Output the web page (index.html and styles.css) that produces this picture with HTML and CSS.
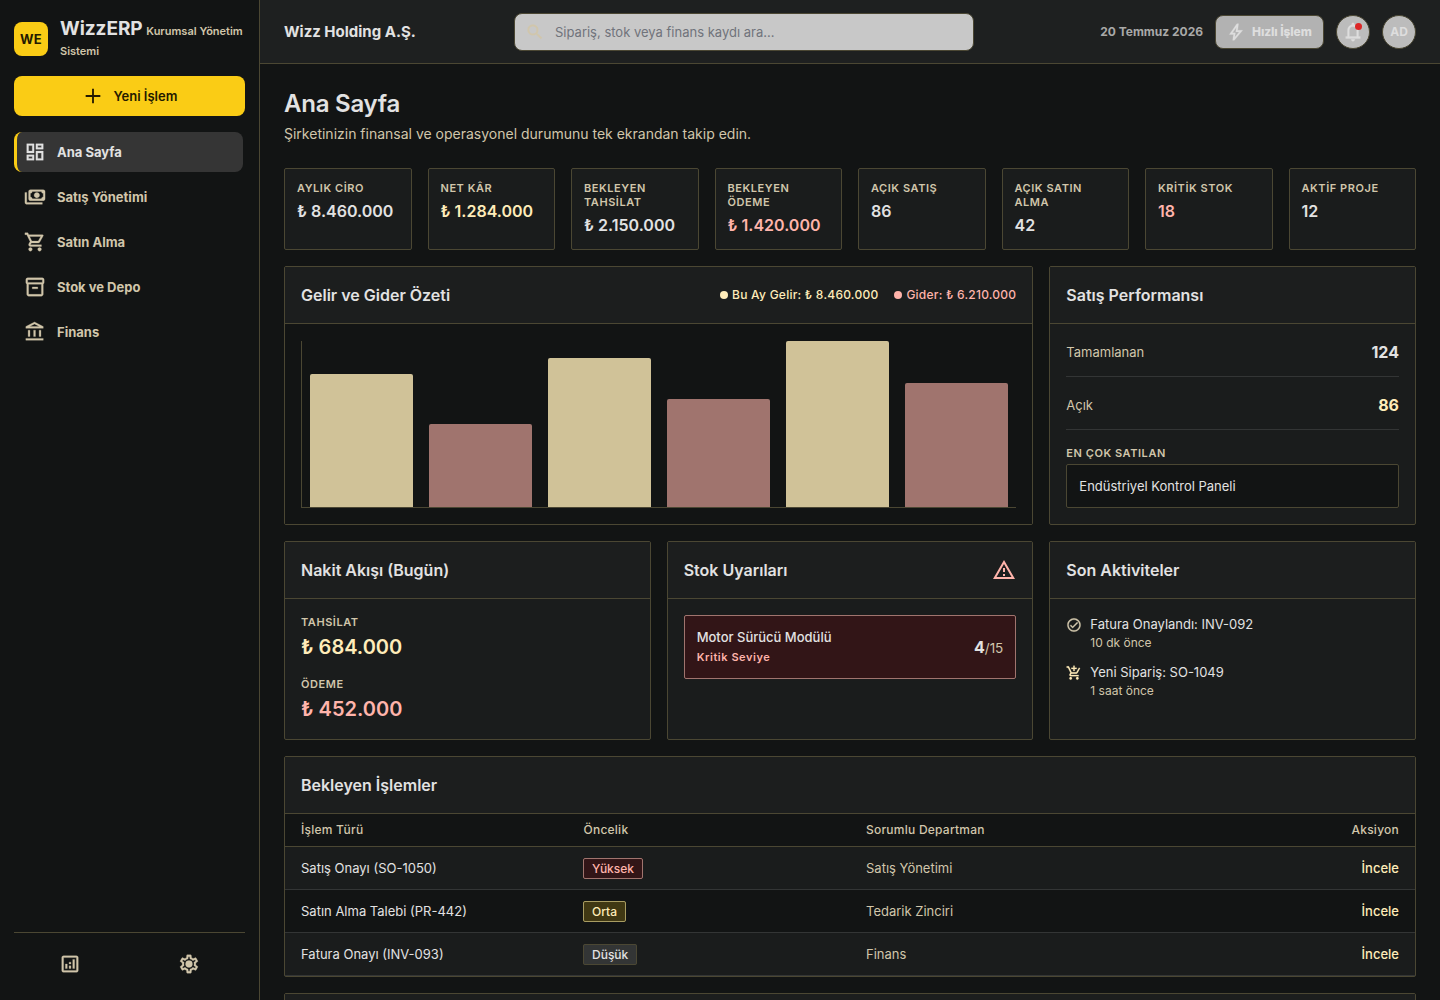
FILE: index.html
```html
<!DOCTYPE html>
<html lang="tr">

<head>
    <meta charset="utf-8">
    <title>WizzERP - Ana Sayfa</title>
    <link rel="stylesheet" href="styles.css">
</head>

<body>
<aside class="sidebar">
    <div class="brand">
        <div class="brand-logo">WE</div>
        <div class="brand-text">
            <span class="brand-name">WizzERP</span>
            <span class="brand-sub">Kurumsal Yönetim Sistemi</span>
        </div>
    </div>
    <button class="new-button">
        <svg class="icon" viewBox="0 0 24 24"><path d="M11 20v-7H4v-2h7V4h2v7h7v2h-7v7z"/></svg>
        <span>Yeni İşlem</span>
    </button>
    <nav class="nav">
        <a class="nav-item active">
            <svg class="icon" viewBox="0 0 24 24"><path d="M19 5v2h-4V5h4M9 5v6H5V5h4m10 8v6h-4v-6h4M9 17v2H5v-2h4M21 3h-8v6h8V3zM11 3H3v10h8V3zm10 8h-8v10h8V11zm-10 4H3v6h8v-6z"/></svg>
            <span>Ana Sayfa</span>
        </a>
        <a class="nav-item">
            <svg class="icon" viewBox="0 0 24 24"><path d="M14 13q-1.25 0-2.125-.875T11 10t.875-2.125T14 7t2.125.875T17 10t-.875 2.125T14 13m-7 3q-.825 0-1.412-.587T5 14V6q0-.825.588-1.412T7 4h14q.825 0 1.413.588T23 6v8q0 .825-.587 1.413T21 16zm2-2h10q0-.825.588-1.412T21 12V8q-.825 0-1.412-.587T19 6H9q0 .825-.587 1.413T7 8v4q.825 0 1.413.588T9 14m11 6H3q-.825 0-1.412-.587T1 18V7h2v11h17z"/></svg>
            <span>Satış Yönetimi</span>
        </a>
        <a class="nav-item">
            <svg class="icon" viewBox="0 0 24 24"><path d="M15.55 13c.75 0 1.41-.41 1.75-1.03l3.58-6.49A.996.996 0 0 0 20.01 4H5.21l-.94-2H1v2h2l3.6 7.59-1.35 2.44C4.52 15.37 5.48 17 7 17h12v-2H7l1.1-2h7.45zM6.16 6h12.15l-2.76 5H8.53L6.16 6zM7 18c-1.1 0-1.99.9-1.99 2S5.9 22 7 22s2-.9 2-2-.9-2-2-2zm10 0c-1.1 0-1.99.9-1.99 2s.89 2 1.99 2 2-.9 2-2-.9-2-2-2z"/></svg>
            <span>Satın Alma</span>
        </a>
        <a class="nav-item">
            <svg class="icon" viewBox="0 0 24 24"><path d="M20 2H4c-1 0-2 .9-2 2v3.01c0 .72.43 1.34 1 1.69V20c0 1.1 1.1 2 2 2h14c.9 0 2-.9 2-2V8.7c.57-.35 1-.97 1-1.69V4c0-1.1-1-2-2-2zm-1 18H5V9h14v11zm1-13H4V4h16v3zM9 12h6v2H9z"/></svg>
            <span>Stok ve Depo</span>
        </a>
        <a class="nav-item">
            <svg class="icon" viewBox="0 0 24 24"><path d="M6.5 10h-2v7h2v-7zm6 0h-2v7h2v-7zm8.5 9H2v2h19v-2zm-2.5-9h-2v7h2v-7zm-7-6.74L16.71 6H6.29l5.21-2.74m0-2.26L2 6v2h19V6l-9.5-5z"/></svg>
            <span>Finans</span>
        </a>
    </nav>
    <div class="sidebar-footer">
        <svg class="icon" viewBox="0 0 24 24"><path d="M19 3H5c-1.100 0-2 .9-2 2v14c0 1.100.9 2 2 2h14c1.100 0 2-.9 2-2V5c0-1.100-.9-2-2-2zm0 16H5V5h14v14zM7 12h2v5H7zm8-5h2v10h-2zm-4 7h2v3h-2zm0-4h2v2h-2z"/></svg>
        <svg class="icon" viewBox="0 0 24 24"><path d="M19.43 12.98c.04-.32.07-.64.07-.98s-.03-.66-.07-.98l2.110-1.650c.19-.15.24-.42.12-.64l-2-3.460c-.12-.22-.39-.3-.61-.22l-2.490 1c-.52-.4-1.080-.73-1.690-.98l-.38-2.650A.488.488 0 0 0 14 2h-4c-.25 0-.46.18-.49.42l-.38 2.650c-.61.25-1.170.59-1.690.98l-2.490-1c-.23-.09-.49 0-.61.22l-2 3.460c-.13.22-.07.49.12.64l2.110 1.650c-.04.32-.07.65-.07.98s.03.66.07.98l-2.110 1.650c-.19.15-.24.42-.12.64l2 3.460c.12.22.39.3.61.22l2.490-1c.52.4 1.080.73 1.690.98l.38 2.650c.03.24.24.42.49.42h4c.25 0 .46-.18.49-.42l.38-2.650c.61-.25 1.170-.59 1.690-.98l2.490 1c.23.09.49 0 .61-.22l2-3.460c.12-.22.07-.49-.12-.64l-2.110-1.650zm-1.980-1.710c.04.31.05.52.05.73s-.02.43-.05.73l-.14 1.130.89.7 1.080.84-.7 1.210-1.270-.51-1.040-.42-.9.68c-.43.32-.84.56-1.250.73l-1.060.43-.16 1.130-.2 1.350h-1.400l-.19-1.350-.16-1.130-1.060-.43c-.43-.18-.83-.41-1.230-.71l-.91-.7-1.060.43-1.270.51-.7-1.210 1.080-.84.89-.7-.14-1.130c-.03-.31-.05-.54-.05-.74s.02-.43.05-.73l.14-1.130-.89-.7-1.080-.84.7-1.210 1.270.51 1.040.42.9-.68c.43-.32.84-.56 1.250-.73l1.060-.43.16-1.130.2-1.350h1.390l.19 1.350.16 1.130 1.060.43c.43.18.83.41 1.230.71l.91.7 1.060-.43 1.270-.51.7 1.210-1.070.85-.89.7.14 1.130z"/><circle cx="12" cy="12" r="3.800"/></svg>
    </div>
</aside>

<div class="page">
    <header class="topbar">
        <div class="company">Wizz Holding A.Ş.</div>
        <div class="search">
            <svg class="icon" viewBox="0 0 24 24"><path d="M15.500 14h-.79l-.28-.27A6.471 6.471 0 0 0 16 9.500 6.500 6.500 0 1 0 9.500 16c1.610 0 3.090-.59 4.230-1.570l.27.28v.79l5 4.990L20.490 19l-4.990-5zm-6 0C7.010 14 5 11.990 5 9.500S7.010 5 9.500 5 14 7.010 14 9.500 11.990 14 9.500 14z"/></svg>
            <span>Sipariş, stok veya finans kaydı ara...</span>
        </div>
        <div class="top-actions">
            <span class="date">20 Temmuz 2026</span>
            <button class="quick-button">
                <svg class="icon" viewBox="0 0 24 24"><path d="m10.550 18.200 5.175-6.200h-4l.725-5.675L7.825 13H11.300zM8 22l1-7H4L13 2h2l-1 8h6L10 22z"/></svg>
                <span>Hızlı İşlem</span>
            </button>
            <div class="round">
                <svg class="icon" viewBox="0 0 24 24"><path d="M4 19v-2h2v-7q0-2.075 1.250-3.688T10.500 4.200v-.7q0-.625.438-1.062T12 2t1.063.438T13.500 3.500v.7q2 .5 3.250 2.113T18 10v7h2v2zm8 3q-.825 0-1.412-.587T10 20h4q0 .825-.587 1.413T12 22m-4-5h8v-7q0-1.650-1.175-2.825T12 6 9.175 7.175 8 10z"/></svg>
                <span class="dot"></span>
            </div>
            <div class="round">AD</div>
        </div>
    </header>

    <main class="content">
        <div class="page-head">
            <h1>Ana Sayfa</h1>
            <p>Şirketinizin finansal ve operasyonel durumunu tek ekrandan takip edin.</p>
        </div>

        <section class="kpis">
            <div class="kpi"><div class="label">AYLIK CİRO</div><div class="value">₺ 8.460.000</div></div>
            <div class="kpi"><div class="label">NET KÂR</div><div class="value primary">₺ 1.284.000</div></div>
            <div class="kpi"><div class="label">BEKLEYEN TAHSİLAT</div><div class="value">₺ 2.150.000</div></div>
            <div class="kpi"><div class="label">BEKLEYEN ÖDEME</div><div class="value error">₺ 1.420.000</div></div>
            <div class="kpi"><div class="label">AÇIK SATIŞ</div><div class="value">86</div></div>
            <div class="kpi"><div class="label">AÇIK SATIN ALMA</div><div class="value">42</div></div>
            <div class="kpi"><div class="label">KRİTİK STOK</div><div class="value error">18</div></div>
            <div class="kpi"><div class="label">AKTİF PROJE</div><div class="value">12</div></div>
        </section>

        <section class="cards">
            <div class="card wide">
                <div class="card-head">
                    <h2>Gelir ve Gider Özeti</h2>
                    <div class="legend">
                        <span class="legend-item primary">Bu Ay Gelir: ₺ 8.460.000</span>
                        <span class="legend-item error">Gider: ₺ 6.210.000</span>
                    </div>
                </div>
                <div class="chart-body">
                    <div class="chart">
                        <div class="bar" style="height: 80%"></div>
                        <div class="bar expense" style="height: 50%"></div>
                        <div class="bar" style="height: 90%"></div>
                        <div class="bar expense" style="height: 65%"></div>
                        <div class="bar" style="height: 100%"></div>
                        <div class="bar expense" style="height: 75%"></div>
                    </div>
                </div>
            </div>
            <div class="card">
                <div class="card-head"><h2>Satış Performansı</h2></div>
                <div class="card-body">
                    <div class="stat-row"><span>Tamamlanan</span><b>124</b></div>
                    <div class="stat-row"><span>Açık</span><b class="primary">86</b></div>
                    <div>
                        <div class="label">EN ÇOK SATILAN</div>
                        <div class="best-seller">Endüstriyel Kontrol Paneli</div>
                    </div>
                </div>
            </div>

            <div class="card">
                <div class="card-head"><h2>Nakit Akışı (Bugün)</h2></div>
                <div class="card-body">
                    <div><div class="label">TAHSİLAT</div><div class="amount primary">₺ 684.000</div></div>
                    <div><div class="label">ÖDEME</div><div class="amount error">₺ 452.000</div></div>
                </div>
            </div>
            <div class="card">
                <div class="card-head">
                    <h2>Stok Uyarıları</h2>
                    <svg class="icon warning error" viewBox="0 0 24 24"><path d="M12 5.990 19.530 19H4.470L12 5.990M12 2 1 21h22L12 2zm1 14h-2v2h2v-2zm0-6h-2v4h2v-4z"/></svg>
                </div>
                <div class="card-body">
                    <div class="alert">
                        <div>
                            <div class="alert-name">Motor Sürücü Modülü</div>
                            <div class="alert-level">Kritik Seviye</div>
                        </div>
                        <div class="alert-count"><b>4</b>/15</div>
                    </div>
                </div>
            </div>
            <div class="card">
                <div class="card-head"><h2>Son Aktiviteler</h2></div>
                <div class="card-body activities">
                    <div class="activity">
                        <svg class="icon" viewBox="0 0 24 24"><path d="M12 2C6.480 2 2 6.480 2 12s4.480 10 10 10 10-4.480 10-10S17.520 2 12 2zm0 18c-4.410 0-8-3.590-8-8s3.590-8 8-8 8 3.590 8 8-3.590 8-8 8zm4.590-12.420L10 14.170l-2.590-2.580L6 13l4 4 8-8z"/></svg>
                        <div><div>Fatura Onaylandı: INV-092</div><div class="time">10 dk önce</div></div>
                    </div>
                    <div class="activity">
                        <svg class="icon primary" viewBox="0 0 24 24"><path d="M11 9h2V6h3V4h-3V1h-2v3H8v2h3v3zm-4 9c-1.100 0-1.990.9-1.990 2S5.900 22 7 22s2-.9 2-2-.9-2-2-2zm10 0c-1.100 0-1.990.9-1.990 2s.89 2 1.990 2 2-.9 2-2-.9-2-2-2zm-8.900-5h7.450c.75 0 1.410-.41 1.750-1.030l3.860-7.010L19.420 4l-3.870 7H8.530L4.270 2H1v2h2l3.600 7.590-1.350 2.440C4.520 15.370 5.480 17 7 17h12v-2H7l1.100-2z"/></svg>
                        <div><div>Yeni Sipariş: SO-1049</div><div class="time">1 saat önce</div></div>
                    </div>
                </div>
            </div>
        </section>

        <section class="card">
            <div class="card-head"><h2>Bekleyen İşlemler</h2></div>
            <table class="table">
                <thead>
                    <tr><th>İşlem Türü</th><th>Öncelik</th><th>Sorumlu Departman</th><th>Aksiyon</th></tr>
                </thead>
                <tbody>
                    <tr><td>Satış Onayı (SO-1050)</td><td><span class="badge high">Yüksek</span></td><td>Satış Yönetimi</td><td>İncele</td></tr>
                    <tr><td>Satın Alma Talebi (PR-442)</td><td><span class="badge medium">Orta</span></td><td>Tedarik Zinciri</td><td>İncele</td></tr>
                    <tr><td>Fatura Onayı (INV-093)</td><td><span class="badge">Düşük</span></td><td>Finans</td><td>İncele</td></tr>
                </tbody>
            </table>
        </section>

        <section class="card">
            <div class="card-head"></div>
        </section>
    </main>
</div>
</body>

</html>
```
FILE: styles.css
```css
* {
    box-sizing: border-box;
}

body {
    margin: 0;
    height: 100vh;
    display: flex;
    overflow: hidden;
    background: #121414;
    color: #e2e2e2;
    font-family: Inter, "Liberation Sans", sans-serif;
    font-size: 13px;
    line-height: 18px;
}

h1, h2, p {
    margin: 0;
}

button {
    font-family: inherit;
}

.icon {
    width: 22px;
    height: 22px;
    flex: none;
    fill: currentColor;
    stroke: currentColor;
    stroke-width: 0.3px;
}

.primary {
    color: #ffecb9;
}
.error {
    color: #ffb4ab;
}

/* sidebar */
.sidebar {
    width: 260px;
    flex: none;
    display: flex;
    flex-direction: column;
    padding: 16px 14px 14px;
    border-right: 1px solid #4b4733;
}
.brand {
    display: flex;
    align-items: center;
    gap: 12px;
    height: 46px;
}
.brand-logo {
    width: 34px;
    height: 34px;
    flex: none;
    display: flex;
    align-items: center;
    justify-content: center;
    border-radius: 8px;
    background: #facc15;
    color: #241a00;
    font-weight: 700;
    letter-spacing: 0.2px;
}
.brand-text {
    line-height: 19px;
    margin-right: -6px;
    padding-top: 2px;
}
.brand-name {
    font-size: 19px;
    font-weight: 700;
    letter-spacing: -0.05px;
}
.brand-sub {
    font-size: 11px;
    font-weight: 600;
    color: #d1c6ab;
}
.new-button {
    height: 40px;
    margin-top: 14px;
    display: flex;
    align-items: center;
    justify-content: center;
    gap: 10px;
    border: 0;
    border-radius: 8px;
    background: #facc15;
    color: #241a00;
    font-size: 13px;
    font-weight: 600;
}
.new-button .icon {
    stroke: none;
}
.nav {
    display: flex;
    flex-direction: column;
    gap: 5px;
    margin: 16px 2px 0 0;
}
.nav-item {
    height: 40px;
    display: flex;
    align-items: center;
    gap: 11.5px;
    padding-left: 6.5px;
    border-left: 3px solid transparent;
    border-radius: 8px;
    color: #d1c6ab;
    font-weight: 700;
}
.nav-item.active {
    border-left-color: #facc15;
    background: #353535;
    color: #e2e2e2;
}
.sidebar-footer {
    display: grid;
    grid-template-columns: 1fr 1fr;
    gap: 8px;
    justify-items: center;
    margin-top: auto;
    height: 54px;
    padding-top: 20px;
    border-top: 1px solid #4b4733;
    color: #d1c6ab;
}

/* topbar */
.page {
    flex: 1;
    min-width: 0;
}
.topbar {
    height: 64px;
    display: flex;
    align-items: center;
    padding: 0 24px;
    border-bottom: 1px solid #4b4733;
    background: #1e2020;
}
.company {
    width: 230px;
    font-size: 15px;
    font-weight: 700;
}
.search {
    width: 460px;
    height: 38px;
    display: flex;
    align-items: center;
    gap: 10px;
    padding: 0 10px;
    border: 1px solid #4b4733;
    border-radius: 8px;
    background: #c8c8c8;
    color: #70737b;
}
.search .icon {
    width: 20px;
    height: 20px;
    color: #d1c6ab;
}
.top-actions {
    display: flex;
    align-items: center;
    gap: 12px;
    margin-left: auto;
}
.date {
    font-size: 12px;
    font-weight: 700;
    color: #a9a9a8;
}
.quick-button {
    width: 109px;
    height: 34px;
    display: flex;
    align-items: center;
    gap: 6px;
    padding: 0 10px;
    border: 1px solid #4b4733;
    border-radius: 8px;
    background: #b2b2b2;
    color: #dedede;
    font-size: 12px;
    font-weight: 800;
    letter-spacing: -0.1px;
    white-space: nowrap;
}
.quick-button .icon {
    width: 20px;
    height: 20px;
}
.round {
    position: relative;
    width: 34px;
    height: 34px;
    display: flex;
    align-items: center;
    justify-content: center;
    border: 1px solid #4b4733;
    border-radius: 50%;
    background: #bcbcbc;
    color: #dedede;
    font-size: 12px;
    font-weight: 700;
}
.dot {
    position: absolute;
    top: 7px;
    right: 7px;
    width: 7px;
    height: 7px;
    border-radius: 50%;
    background: #dc2626;
}

/* content */
.content {
    display: flex;
    flex-direction: column;
    gap: 16px;
    padding: 24px;
}
.page-head {
    margin-bottom: 8px;
}
h1 {
    font-size: 24px;
    line-height: 32px;
    font-weight: 600;
    letter-spacing: -0.24px;
}
.page-head p {
    margin-top: 4px;
    font-size: 14px;
    line-height: 20px;
    color: #d1c6ab;
}
.kpis {
    display: grid;
    grid-template-columns: repeat(8, 1fr);
    gap: 16px;
}
.kpi {
    padding: 12px;
    border: 1px solid #4b4733;
    border-radius: 2px;
    background: #1a1c1c;
}
.label {
    font-size: 11px;
    line-height: 14px;
    font-weight: 600;
    letter-spacing: 0.55px;
    color: #d1c6ab;
}
.value {
    margin-top: 4px;
    font-size: 16px;
    line-height: 24px;
    font-weight: 600;
    white-space: nowrap;
}

.cards {
    display: grid;
    grid-template-columns: repeat(3, 1fr);
    gap: 16px;
}
.card {
    display: flex;
    flex-direction: column;
    border: 1px solid #4b4733;
    border-radius: 2px;
    background: #1a1c1c;
}
.wide {
    grid-column: span 2;
}
.card-head {
    height: 57px;
    flex: none;
    display: flex;
    align-items: center;
    justify-content: space-between;
    padding: 0 16px;
    border-bottom: 1px solid #4b4733;
    background: #1c1e1e;
}
h2 {
    font-size: 16px;
    line-height: 24px;
    font-weight: 600;
}
.warning {
    width: 24px;
    height: 24px;
    stroke: none;
}
.legend {
    display: flex;
    gap: 16px;
    font-size: 12px;
    font-weight: 500;
    letter-spacing: 0.24px;
}
.legend-item {
    display: flex;
    align-items: center;
    gap: 4px;
}
.legend-item::before {
    content: "";
    width: 8px;
    height: 8px;
    border-radius: 50%;
    background: currentColor;
}
.chart-body {
    flex: 1;
    display: flex;
    padding: 17px 16px 16px;
    background: #121414;
}
.chart {
    flex: 1;
    display: flex;
    align-items: flex-end;
    gap: 16px;
    padding: 0 8px;
    border-left: 1px solid #4b4733;
    border-bottom: 1px solid #4b4733;
}
.bar {
    flex: 1;
    border-radius: 2px 2px 0 0;
    background: #d0c298;
}
.bar.expense {
    background: #a0746e;
}
.card-body {
    display: flex;
    flex-direction: column;
    gap: 16px;
    padding: 16px;
}
.stat-row {
    display: flex;
    align-items: center;
    justify-content: space-between;
    padding-bottom: 12px;
    border-bottom: 1px solid #333535;
    color: #d1c6ab;
}
.stat-row b {
    font-size: 16px;
    line-height: 24px;
    font-weight: 700;
}
.stat-row b:not(.primary) {
    color: #e2e2e2;
}
.best-seller {
    margin-top: 4px;
    padding: 12px;
    border: 1px solid #4b4733;
    border-radius: 2px;
    background: #121414;
}
.amount {
    margin-top: 4px;
    font-size: 20px;
    line-height: 28px;
    font-weight: 600;
}
.alert {
    display: flex;
    align-items: center;
    justify-content: space-between;
    padding: 12px;
    border: 1px solid #a0746e;
    border-radius: 2px;
    background: #321517;
}
.alert-name {
    font-weight: 500;
}
.alert-level {
    margin-top: 2px;
    font-size: 11px;
    line-height: 18px;
    font-weight: 600;
    letter-spacing: 0.55px;
    color: #ffb4ab;
}
.alert-count {
    font-size: 13.5px;
    color: #d1c6ab;
}
.alert-count b {
    font-size: 16px;
    color: #e2e2e2;
}
.activities {
    gap: 10px;
}
.activity {
    display: flex;
    gap: 8px;
}
.activity .icon {
    width: 16px;
    height: 16px;
    margin-top: 2px;
}
.activity .icon:not(.primary) {
    color: #d1c6ab;
}
.time {
    font-size: 12px;
    line-height: 20px;
    color: #d1c6ab;
}

/* table */
.table {
    width: 100%;
    table-layout: fixed;
    border-collapse: separate;
    border-spacing: 0;
}
.table th {
    height: 33px;
    padding: 0 16px;
    border-bottom: 1px solid #4b4733;
    background: #121414;
    color: #d1c6ab;
    font-size: 12px;
    font-weight: 500;
    letter-spacing: 0.24px;
    text-align: left;
}
.table td {
    height: 43px;
    padding: 0 16px;
    border-bottom: 1px solid #333535;
}
.table tr:nth-child(even) td {
    background: #121414;
}
.table td:nth-child(3) {
    color: #d1c6ab;
}
.table th:last-child {
    text-align: right;
}
.table td:last-child {
    color: #ffecb9;
    font-weight: 500;
    text-align: right;
}
.badge {
    margin-left: -0.5px;
    padding: 2px 8px;
    border: 1px solid #4b4733;
    border-radius: 2px;
    background: #333535;
    font-size: 12px;
    font-weight: 500;
}
.badge.high {
    border-color: #a0746e;
    background: #321517;
    color: #ffb4ab;
}
.badge.medium {
    border-color: #a89c62;
    background: #403813;
    color: #ffecb9;
}
```
